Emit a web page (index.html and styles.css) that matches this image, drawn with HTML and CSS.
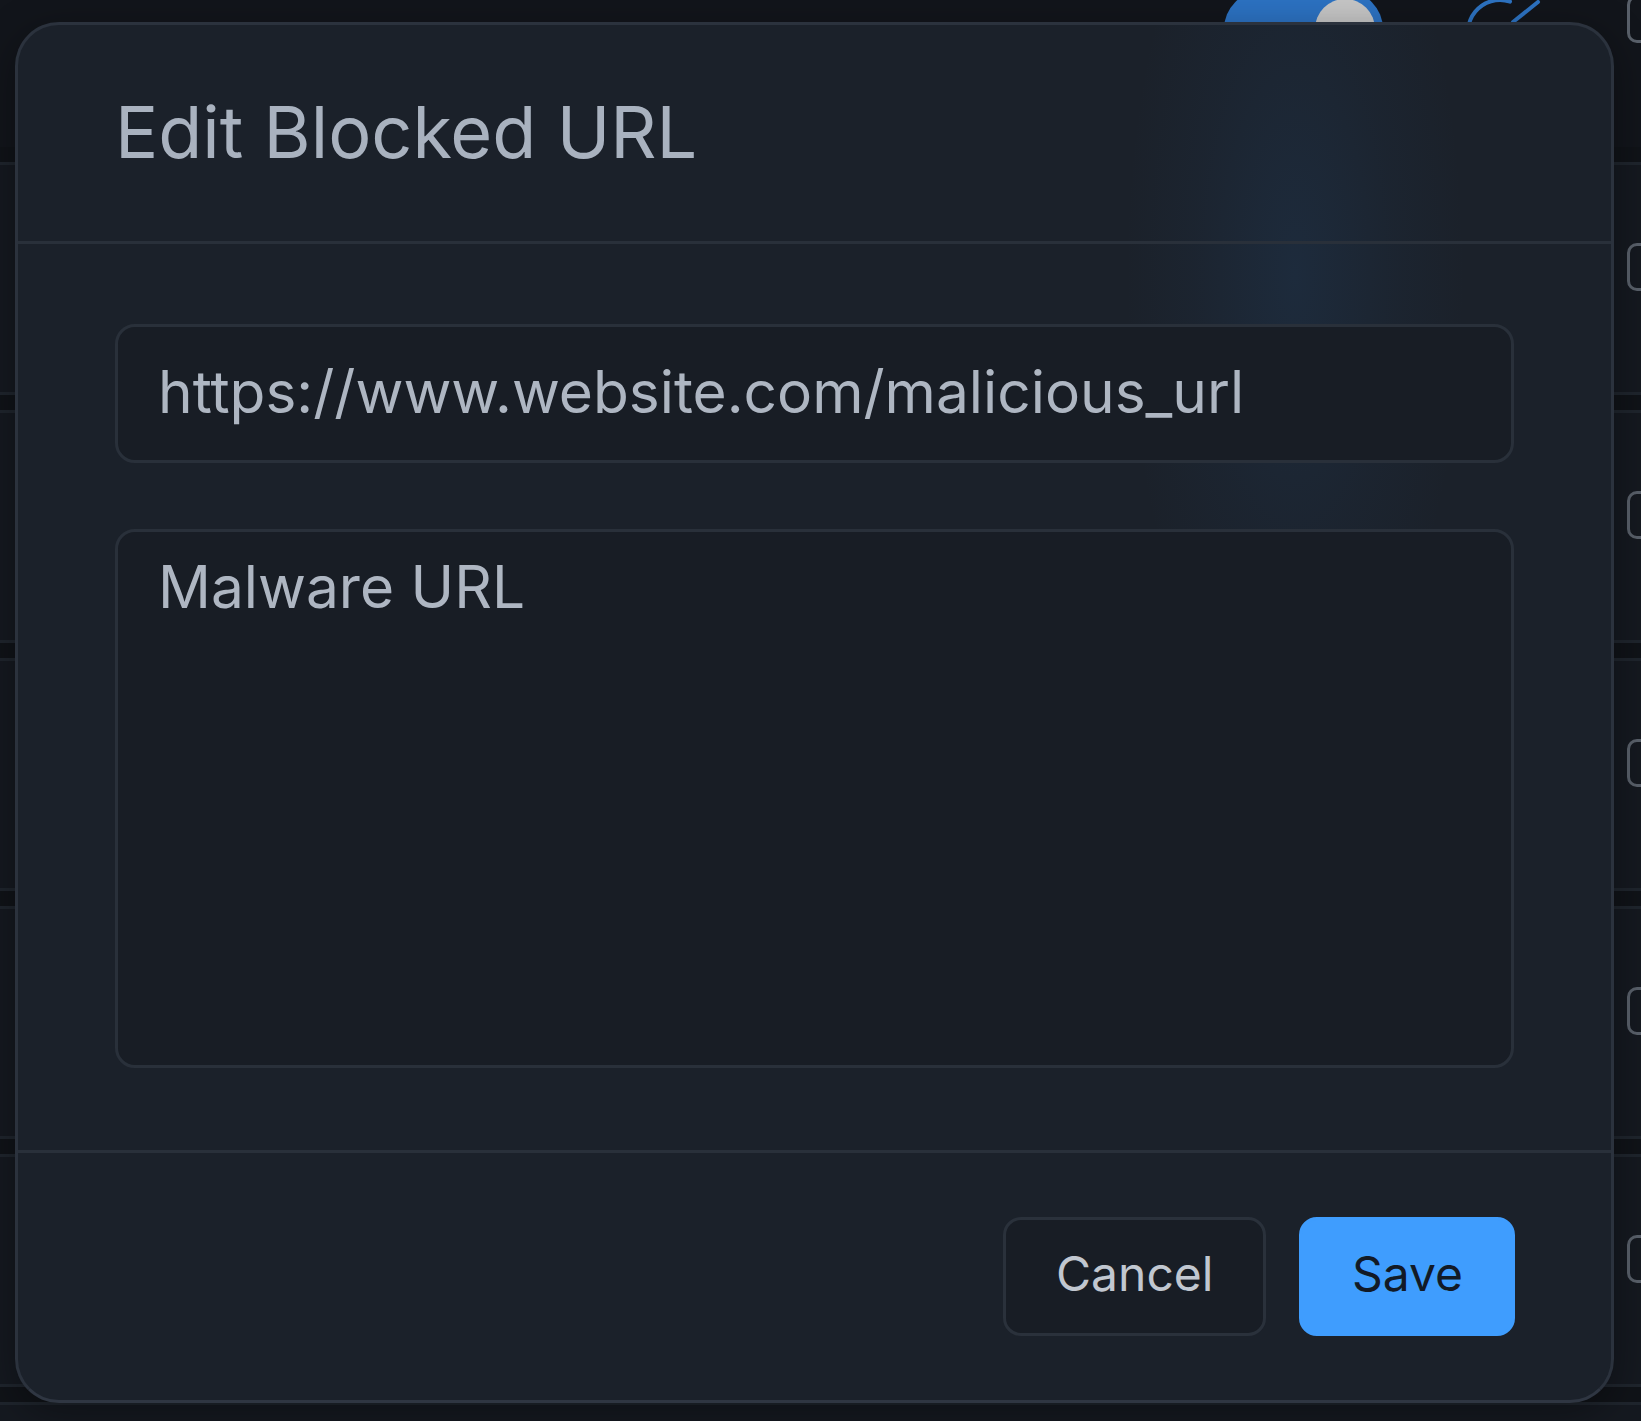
FILE: index.html
```html
<!DOCTYPE html>
<html lang="en">
<head>
<meta charset="utf-8">
<title>Edit Blocked URL</title>
<link rel="stylesheet" href="styles.css">
</head>
<body>
<div class="page">
  <div class="rows">
    <div class="row row-first">
      <div class="toggle"><span class="knob"></span></div>
      <svg class="row-icon" width="90" height="80" viewBox="0 0 90 80" fill="none" stroke="#2d73c2" stroke-width="4" stroke-linecap="round">
        <path d="M12.3 58 A32 32 0 0 1 50 11.6"/>
        <path d="M53 32 L78 12"/>
      </svg>
      <span class="check"></span>
    </div>
    <div class="row"><span class="check"></span></div>
    <div class="row"><span class="check"></span></div>
    <div class="row"><span class="check"></span></div>
    <div class="row"><span class="check"></span></div>
    <div class="row"><span class="check"></span></div>
    <div class="row"><span class="check"></span></div>
  </div>

  <div class="modal" role="dialog" aria-labelledby="modal-title">
    <header class="modal-head">
      <h2 id="modal-title" class="modal-title">Edit Blocked URL</h2>
    </header>
    <div class="modal-body">
      <input class="field" type="text" value="https://www.website.com/malicious_url">
      <textarea class="field field-area">Malware URL</textarea>
    </div>
    <footer class="modal-foot">
      <button class="btn btn-cancel" type="button">Cancel</button>
      <button class="btn btn-save" type="button">Save</button>
    </footer>
  </div>
</div>
</body>
</html>
```

FILE: styles.css
```css
* {
  box-sizing: border-box;
}

html, body {
  margin: 0;
  padding: 0;
  width: 1641px;
  height: 1421px;
  overflow: hidden;
  background: #101318;
  font-family: Inter, "Noto Sans", "Liberation Sans", sans-serif;
}

.page {
  position: relative;
  width: 1641px;
  height: 1421px;
  overflow: hidden;
}

/* background list behind the dialog */
.rows {
  display: flex;
  flex-direction: column;
  gap: 15px;
  margin-top: -86px;
}

.row {
  height: 233px;
  display: flex;
  align-items: flex-start;
  justify-content: flex-end;
  background: #151920;
  border-top: 3px solid #1f252d;
  border-bottom: 3px solid #1f252d;
}

.row-first {
  background: #12151b;
  border-color: #12151b;
}

.toggle {
  margin-top: 74px;
  width: 159px;
  height: 76px;
  border-radius: 38px;
  background: #2c72c2;
  display: flex;
  justify-content: flex-end;
  padding: 8px;
}

.knob {
  width: 60px;
  height: 60px;
  border-radius: 50%;
  background: #c6c6c6;
}

.row-icon {
  margin-top: 73px;
  margin-left: 77px;
  display: block;
}

.check {
  margin-top: 78px;
  margin-left: 77px;
  margin-right: -34px;
  width: 48px;
  height: 48px;
  border: 3px solid #59606a;
  border-radius: 10px;
  flex: none;
}

/* dialog */
.modal {
  position: absolute;
  left: 15px;
  top: 22px;
  width: 1599px;
  height: 1381px;
  display: flex;
  flex-direction: column;
  border: 3px solid #2b323d;
  border-bottom-color: #2f3642;
  border-radius: 44px;
  background:
    radial-gradient(ellipse 170px 460px at 1277px 250px, rgba(40, 95, 155, 0.16), rgba(40, 95, 155, 0.05) 60%, rgba(40, 95, 155, 0) 100%),
    #1b212a;
  box-shadow: 0 10px 40px rgba(0, 0, 0, 0.35);
}

.modal-head {
  height: 219px;
  padding: 0 97px 4px;
  display: flex;
  align-items: center;
  border-bottom: 3px solid #29303a;
}

.modal-title {
  margin: 0;
  font-size: 72px;
  font-weight: 400;
  line-height: normal;
  color: #a9b2bf;
  letter-spacing: 0;
}

.modal-body {
  padding: 80px 97px 82px;
  display: flex;
  flex-direction: column;
  gap: 66px;
}

.field {
  display: block;
  width: 100%;
  height: 139px;
  margin: 0;
  padding: 0 40px 4px;
  border: 3px solid #29303a;
  border-radius: 20px;
  background: #181d25;
  color: #aeb6c2;
  font-family: Inter, "Noto Sans", "Liberation Sans", sans-serif;
  font-size: 58.6px;
  font-weight: 400;
  outline: none;
}

.field-area {
  height: 539px;
  padding: 11px 40px;
  line-height: 1.5;
  resize: none;
  overflow: hidden;
}

.modal-foot {
  flex: 1;
  display: flex;
  align-items: center;
  justify-content: flex-end;
  gap: 33px;
  padding: 0 96px;
  border-top: 3px solid #29303a;
}

.btn {
  height: 119px;
  padding: 0 50px 5px;
  border: 3px solid #2a313b;
  border-radius: 18px;
  font-family: Inter, "Noto Sans", "Liberation Sans", sans-serif;
  font-size: 48px;
  font-weight: 400;
  line-height: 1;
  cursor: pointer;
}

.btn-cancel {
  width: 263px;
  background: #181d25;
  color: #c1c7d0;
}

.btn-save {
  width: 216px;
  background: #3f9dfe;
  border-color: #3f9dfe;
  color: #121a26;
}
```
